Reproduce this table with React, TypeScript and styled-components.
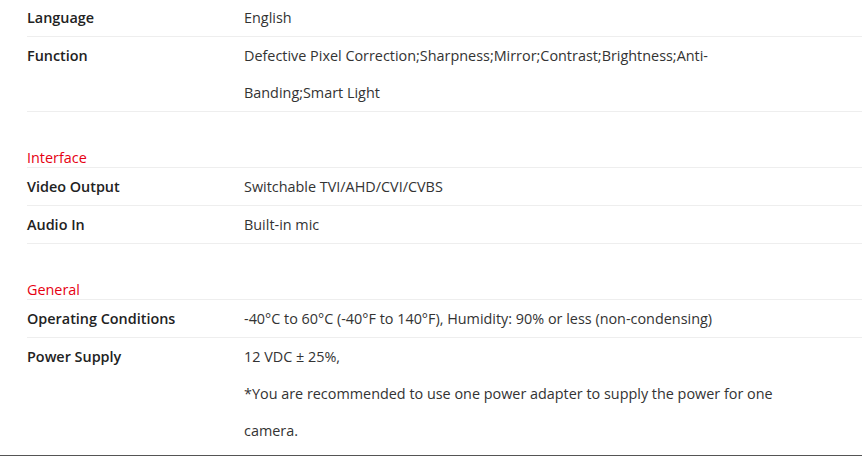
import React from 'react';
import styled, { createGlobalStyle } from 'styled-components';

const GlobalStyle = createGlobalStyle`
  html, body {
    margin: 0;
    padding: 0;
    background: #fff;
  }
  body {
    font-family: "Open Sans", "Noto Sans", Arial, sans-serif;
    color: #333;
  }
`;

const Specs = styled.div`
  padding: 0 0 6px 27px;
  margin-top: -1px;
  border-bottom: 1px solid #555;
`;

const Group = styled.section`
  & + & {
    margin-top: 35px;
  }
`;

const GroupTitle = styled.h3`
  margin: -1px 0 0;
  padding-top: 3px;
  font-size: 14.4px;
  font-weight: 400;
  line-height: 18px;
  color: #e60012;
  border-bottom: 1px solid #eee;
`;

const Row = styled.div<{ $last?: boolean }>`
  display: grid;
  grid-template-columns: 217px 545px 1fr;
  font-size: 14.4px;
  line-height: 37px;
  border-bottom: ${(p) => (p.$last ? 'none' : '1px solid #eee')};
`;

const Label = styled.div`
  font-weight: 600;
  color: #222;
`;

const Value = styled.div`
  color: #333;
`;

type Spec = { label: string; value: string[] };

const groups: { title?: string; rows: Spec[] }[] = [
  {
    rows: [
      { label: 'Language', value: ['English'] },
      {
        label: 'Function',
        value: [
          'Defective Pixel Correction;Sharpness;Mirror;Contrast;Brightness;Anti-Banding;Smart Light',
        ],
      },
    ],
  },
  {
    title: 'Interface',
    rows: [
      { label: 'Video Output', value: ['Switchable TVI/AHD/CVI/CVBS'] },
      { label: 'Audio In', value: ['Built-in mic'] },
    ],
  },
  {
    title: 'General',
    rows: [
      {
        label: 'Operating Conditions',
        value: ['-40°C to 60°C (-40°F to 140°F), Humidity: 90% or less (non-condensing)'],
      },
      {
        label: 'Power Supply',
        value: [
          '12 VDC ± 25%,',
          '*You are recommended to use one power adapter to supply the power for one camera.',
        ],
      },
    ],
  },
];

export default function App() {
  return (
    <>
      <GlobalStyle />
      <Specs>
        {groups.map((g, gi) => (
          <Group key={gi}>
            {g.title && <GroupTitle>{g.title}</GroupTitle>}
            {g.rows.map((r, ri) => (
              <Row key={r.label} $last={gi === groups.length - 1 && ri === g.rows.length - 1}>
                <Label>{r.label}</Label>
                <Value>
                  {r.value.map((v, i) => (
                    <div key={i}>{v}</div>
                  ))}
                </Value>
              </Row>
            ))}
          </Group>
        ))}
      </Specs>
    </>
  );
}
